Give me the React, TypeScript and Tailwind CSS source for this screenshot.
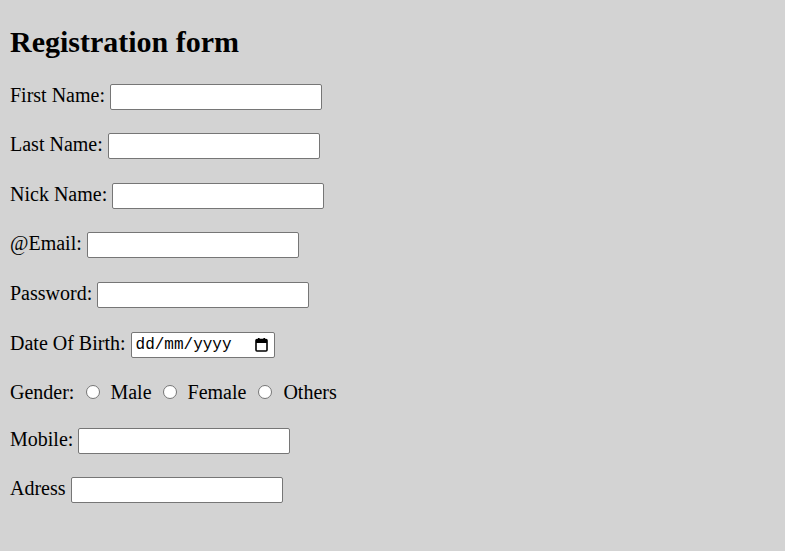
import React from 'react';

const TextRow = (props: { label: string }) => {
    return (
        <div className="flex items-center h-[26px]">
            <span className="leading-none mb-[4px]">{props.label}</span>
            <input
                type="text"
                className="ml-[5px] w-[212px] h-[26px] bg-white border border-[#767676] rounded-[2px] outline-none"
            />
        </div>
    );
};

const Radio = () => <span className="inline-block w-[14px] h-[14px] rounded-full bg-white border border-[#767676]" />;

const CalendarIcon = () => (
    <svg width="13" height="14" viewBox="0 0 13 14" fill="none">
        <rect x="1" y="1.5" width="11" height="11.5" rx="1" stroke="#000" strokeWidth="1.6" />
        <rect x="1" y="2" width="11" height="3" fill="#000" />
        <rect x="3" y="0" width="1.6" height="3" fill="#000" />
        <rect x="8.4" y="0" width="1.6" height="3" fill="#000" />
    </svg>
);

export default function App() {
    return (
        <div className="min-h-screen w-full bg-[#d3d3d3] text-black px-[10px] text-[20px] font-['Liberation_Serif','Times_New_Roman',serif]">
            <h1 className="pt-[27px] text-[30px] font-bold leading-[30px]">Registration form</h1>

            <div className="flex flex-col mt-[27px]">
                <TextRow label="First Name:" />
                <div className="mt-[23px]">
                    <TextRow label="Last Name:" />
                </div>
                <div className="mt-[24px]">
                    <TextRow label="Nick Name:" />
                </div>
                <div className="mt-[23px]">
                    <TextRow label="@Email:" />
                </div>
                <div className="mt-[24px]">
                    <TextRow label="Password:" />
                </div>

                <div className="mt-[24px] flex items-center h-[26px]">
                    <span className="leading-none mb-[4px]">Date Of Birth:</span>
                    <div className="ml-[5px] w-[144px] h-[26px] bg-white border border-[#767676] rounded-[2px] flex items-center pl-[4px] pr-[6px] justify-between">
                        <span className="text-[16px] leading-none font-['Liberation_Mono','DejaVu_Sans_Mono',monospace]">dd/mm/yyyy</span>
                        <CalendarIcon />
                    </div>
                </div>

                <div className="mt-[22px] flex items-center h-[26px]">
                    <span className="leading-none mb-[2px]">Gender:</span>
                    <span className="ml-[12px] flex items-center -mt-[2px]"><Radio /></span>
                    <span className="ml-[10px] leading-none mb-[2px]">Male</span>
                    <span className="ml-[11px] flex items-center -mt-[2px]"><Radio /></span>
                    <span className="ml-[11px] leading-none mb-[2px]">Female</span>
                    <span className="ml-[12px] flex items-center -mt-[2px]"><Radio /></span>
                    <span className="ml-[11px] leading-none mb-[2px]">Others</span>
                </div>

                <div className="mt-[22px]">
                    <TextRow label="Mobile:" />
                </div>
                <div className="mt-[23px]">
                    <TextRow label="Adress" />
                </div>
            </div>
        </div>
    );
}
